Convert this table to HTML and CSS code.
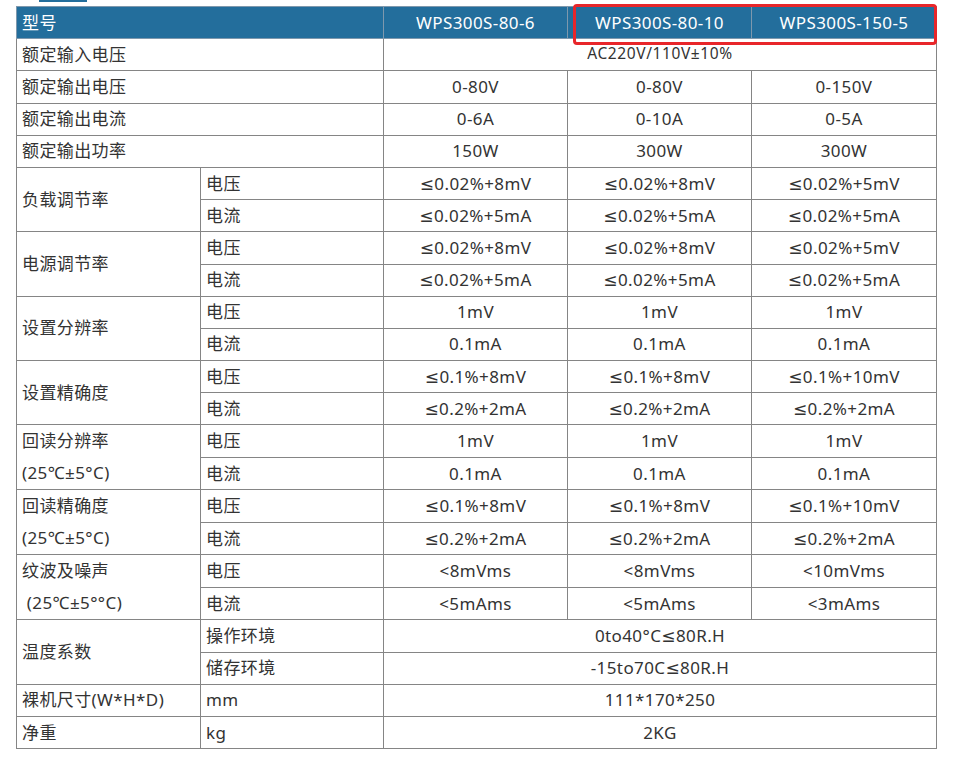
FILE: index.html
```html
<!DOCTYPE html>
<html lang="zh-CN">
<head>
<meta charset="utf-8">
<title>WPS300S 参数</title>
<link rel="stylesheet" href="styles.css">
</head>
<body>
<div class="page">
  <div class="tab-mark"></div>
  <table class="spec">
    <colgroup>
      <col class="c1"><col class="c2"><col class="c3"><col class="c4"><col class="c5">
    </colgroup>
    <thead>
      <tr class="head">
        <th colspan="2" class="left">型号</th>
        <th>WPS300S-80-6</th>
        <th>WPS300S-80-10</th>
        <th>WPS300S-150-5</th>
      </tr>
    </thead>
    <tbody>
      <tr><td colspan="2" class="left">额定输入电压</td><td colspan="3" class="small">AC220V/110V±10%</td></tr>
      <tr><td colspan="2" class="left">额定输出电压</td><td>0-80V</td><td>0-80V</td><td>0-150V</td></tr>
      <tr><td colspan="2" class="left">额定输出电流</td><td>0-6A</td><td>0-10A</td><td>0-5A</td></tr>
      <tr><td colspan="2" class="left">额定输出功率</td><td>150W</td><td>300W</td><td>300W</td></tr>

      <tr><td rowspan="2" class="left">负载调节率</td><td class="left">电压</td><td>≤0.02%+8mV</td><td>≤0.02%+8mV</td><td>≤0.02%+5mV</td></tr>
      <tr><td class="left">电流</td><td>≤0.02%+5mA</td><td>≤0.02%+5mA</td><td>≤0.02%+5mA</td></tr>

      <tr><td rowspan="2" class="left">电源调节率</td><td class="left">电压</td><td>≤0.02%+8mV</td><td>≤0.02%+8mV</td><td>≤0.02%+5mV</td></tr>
      <tr><td class="left">电流</td><td>≤0.02%+5mA</td><td>≤0.02%+5mA</td><td>≤0.02%+5mA</td></tr>

      <tr><td rowspan="2" class="left">设置分辨率</td><td class="left">电压</td><td>1mV</td><td>1mV</td><td>1mV</td></tr>
      <tr><td class="left">电流</td><td>0.1mA</td><td>0.1mA</td><td>0.1mA</td></tr>

      <tr><td rowspan="2" class="left">设置精确度</td><td class="left">电压</td><td>≤0.1%+8mV</td><td>≤0.1%+8mV</td><td>≤0.1%+10mV</td></tr>
      <tr><td class="left">电流</td><td>≤0.2%+2mA</td><td>≤0.2%+2mA</td><td>≤0.2%+2mA</td></tr>

      <tr><td rowspan="2" class="left two">回读分辨率<br>(25℃±5°C)</td><td class="left">电压</td><td>1mV</td><td>1mV</td><td>1mV</td></tr>
      <tr><td class="left">电流</td><td>0.1mA</td><td>0.1mA</td><td>0.1mA</td></tr>

      <tr><td rowspan="2" class="left two">回读精确度<br>(25℃±5°C)</td><td class="left">电压</td><td>≤0.1%+8mV</td><td>≤0.1%+8mV</td><td>≤0.1%+10mV</td></tr>
      <tr><td class="left">电流</td><td>≤0.2%+2mA</td><td>≤0.2%+2mA</td><td>≤0.2%+2mA</td></tr>

      <tr><td rowspan="2" class="left two">纹波及噪声<br>&nbsp;(25℃±5°°C)</td><td class="left">电压</td><td>&lt;8mVms</td><td>&lt;8mVms</td><td>&lt;10mVms</td></tr>
      <tr><td class="left">电流</td><td>&lt;5mAms</td><td>&lt;5mAms</td><td>&lt;3mAms</td></tr>

      <tr><td rowspan="2" class="left">温度系数</td><td class="left">操作环境</td><td colspan="3">0to40°C≤80R.H</td></tr>
      <tr><td class="left">储存环境</td><td colspan="3">-15to70C≤80R.H</td></tr>

      <tr><td class="left">裸机尺寸(W*H*D)</td><td class="left">mm</td><td colspan="3">111*170*250</td></tr>
      <tr><td class="left">净重</td><td class="left">kg</td><td colspan="3">2KG</td></tr>
    </tbody>
  </table>
  <div class="highlight"></div>
</div>
</body>
</html>
```

FILE: styles.css
```css
html, body {
  margin: 0;
  padding: 0;
  background: #ffffff;
}

.page {
  position: relative;
  padding: 6px 0 0 16px;
  font-family: "Noto Sans", "DejaVu Sans", "Noto Sans CJK SC", sans-serif;
  color: #333333;
}

.tab-mark {
  position: absolute;
  left: 39px;
  top: 0;
  width: 48px;
  height: 2px;
  background: #236e9c;
}

.spec {
  border-collapse: collapse;
  width: 920px;
  table-layout: fixed;
  font-size: 17px;
  letter-spacing: 0.4px;
}

.spec col.c1 { width: 184px; }
.spec col.c2 { width: 183px; }
.spec col.c3 { width: 184px; }
.spec col.c4 { width: 184px; }
.spec col.c5 { width: 185px; }

.spec th,
.spec td {
  border: 1px solid #858585;
  height: 32.2px;
  padding: 0 5px;
  text-align: center;
  vertical-align: middle;
  line-height: 22px;
  box-sizing: border-box;
  white-space: nowrap;
}

.spec td.two {
  line-height: 32px;
}

.spec .head th {
  background: #236e9c;
  color: #ffffff;
  font-weight: normal;
  border-color: #7e98ad;
}

.spec .left {
  text-align: left;
}

.spec .small {
  font-size: 15.5px;
  letter-spacing: 0.6px;
  padding-bottom: 3px;
}

.highlight {
  position: absolute;
  left: 573px;
  top: 4px;
  width: 364px;
  height: 41px;
  border: 3px solid #e8262a;
  border-radius: 4px;
  box-sizing: border-box;
  pointer-events: none;
}
```
